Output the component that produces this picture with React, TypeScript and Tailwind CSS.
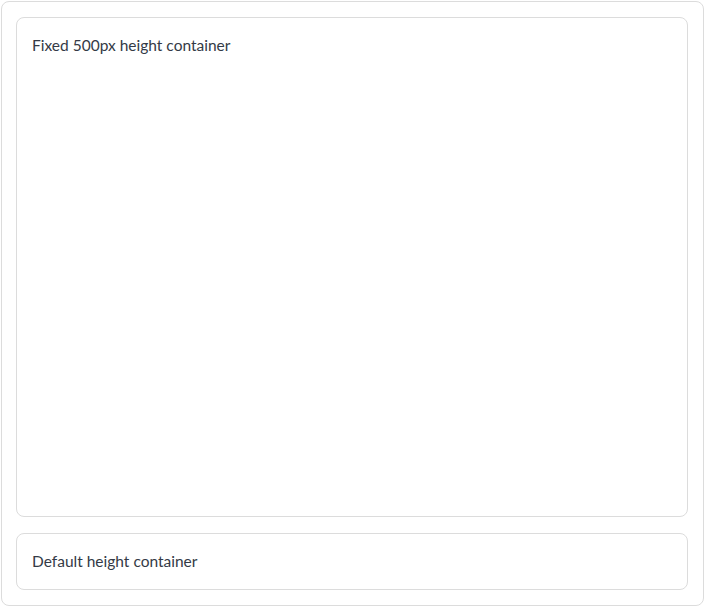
export default function App() {
  return (
    <div className="pl-px pt-px w-[704px] font-['Lato','Noto_Sans',sans-serif] text-[15.5px] text-[#343a46]">
      <div className="w-[703px] h-[605px] border border-[#dcdcdc] rounded-lg pl-[14px] pr-[15px] pt-[15px] pb-[14px] flex flex-col gap-4">
        <div className="h-[500px] border border-[#dcdcdc] rounded-lg px-[15px] pt-[15px] pb-4 leading-6">
          Fixed 500px height container
        </div>
        <div className="border border-[#dcdcdc] rounded-lg px-[15px] pt-[15px] pb-4 leading-6">
          Default height container
        </div>
      </div>
    </div>
  );
}
